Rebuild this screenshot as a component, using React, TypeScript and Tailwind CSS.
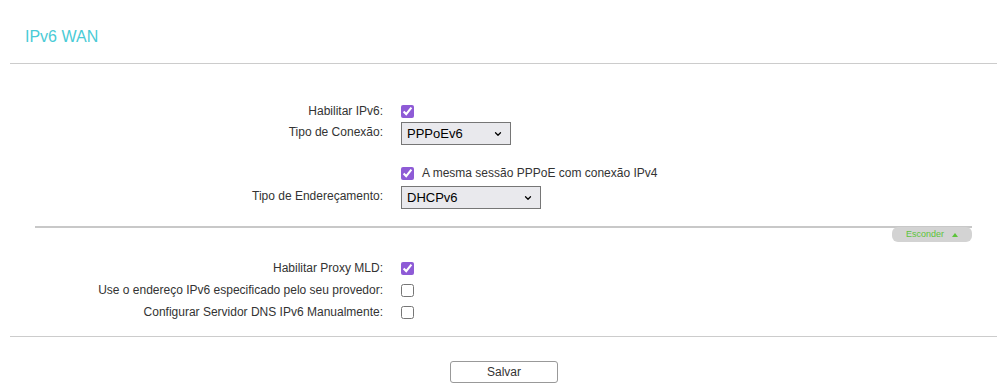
import { ChevronDown } from "lucide-react";

function Row({ label, children, top }: { label: string; children: React.ReactNode; top?: boolean }) {
  return (
    <div className={`flex ${top ? "items-start" : "items-center"}`}>
      <div className={`w-[383px] shrink-0 text-right text-[12px] text-[#333] ${top ? "pt-[1px]" : ""}`}>{label}</div>
      <div className="ml-[18px] flex items-center">{children}</div>
    </div>
  );
}

function Check({ checked }: { checked?: boolean }) {
  return (
    <input
      type="checkbox"
      defaultChecked={checked}
      className="m-0 h-[13px] w-[13px] accent-[#8e5bd6]"
    />
  );
}

function Select({ value, width }: { value: string; width: string }) {
  return (
    <div
      className={`flex h-[23px] ${width} items-center justify-between border border-[#767676] bg-[#e9e9ed] pl-[5px] pr-[7px] text-[13px] text-black`}
    >
      <span>{value}</span>
      <ChevronDown size={10} strokeWidth={3} />
    </div>
  );
}

export default function App() {
  return (
    <div className="h-[389px] w-[1002px] overflow-hidden bg-white font-['Liberation_Sans',Arial,sans-serif]">
      <div className="px-[25px] pt-[28px] text-[16px] leading-[18px] text-[#4acbd6]">IPv6 WAN</div>
      <div className="ml-[10px] mr-[5px] mt-[17px] h-px bg-[#cccccc]" />

      <div className="pt-[38px]">
        <Row label="Habilitar IPv6:">
          <Check checked />
        </Row>
        <div className="mt-[2px]">
          <Row label="Tipo de Conexão:" top>
            <Select value="PPPoEv6" width="w-[110px]" />
          </Row>
        </div>
        <div className="mt-[19px]">
          <Row label="">
            <Check checked />
            <span className="ml-[8px] text-[12px] text-[#333]">A mesma sessão PPPoE com conexão IPv4</span>
          </Row>
        </div>
        <div className="mt-[4px]">
          <Row label="Tipo de Endereçamento:" top>
            <Select value="DHCPv6" width="w-[140px]" />
          </Row>
        </div>
      </div>

      <div className="mt-[16px] flex items-start pl-[35px] pr-[30px]">
        <div className="mt-[1px] h-[2px] flex-1 bg-[#c8c8c8]" />
      </div>
      <div className="-mt-[1px] flex justify-end pr-[30px]">
        <div className="flex h-[15px] w-[80px] items-center justify-center gap-[8px] rounded-[6px] bg-[#d3d3d3] text-[9px] text-[#5cc43a]">
          <span>Esconder</span>
          <span className="h-0 w-0 border-x-[3px] border-b-[4px] border-x-transparent border-b-[#5cc43a]" />
        </div>
      </div>

      <div className="mt-[17px] flex flex-col gap-[4px]">
        <Row label="Habilitar Proxy MLD:">
          <Check checked />
        </Row>
        <Row label="Use o endereço IPv6 especificado pelo seu provedor:">
          <Check />
        </Row>
        <Row label="Configurar Servidor DNS IPv6 Manualmente:">
          <Check />
        </Row>
      </div>

      <div className="ml-[10px] mr-[5px] mt-[15px] h-px bg-[#cccccc]" />

      <div className="mt-[24px] flex justify-center">
        <button className="ml-[6px] h-[22px] w-[108px] rounded-[3px] border border-[#999] bg-white text-[12px] text-[#333]">
          Salvar
        </button>
      </div>
    </div>
  );
}
